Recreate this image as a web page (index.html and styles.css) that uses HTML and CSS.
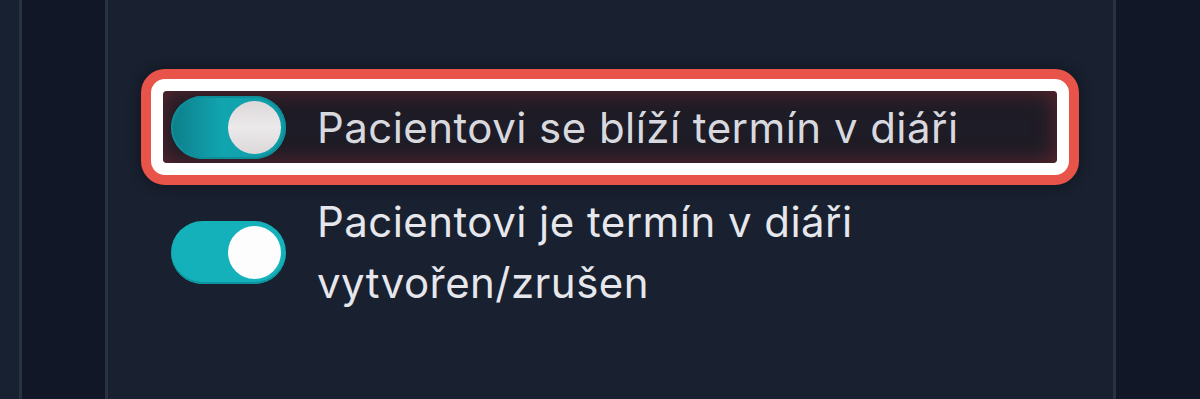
FILE: index.html
```html
<!DOCTYPE html>
<html>
<head>
    <title>Notifikace</title>
    <link rel="stylesheet" href="styles.css">
</head>
<body>
    <div class="layout">
        <div class="edge"></div>
        <div class="side"></div>

        <!-- Main settings panel -->
        <div class="panel">
            <div class="options">
                <div class="highlight">
                    <label class="option boxed">
                        <span class="switch dim"><span class="knob"></span></span>
                        <span class="option-text">Pacientovi se blíží termín v diáři</span>
                    </label>
                </div>
                <label class="option plain">
                    <span class="switch"><span class="knob"></span></span>
                    <span class="option-text bright">Pacientovi je termín v diáři<br>vytvořen/zrušen</span>
                </label>
            </div>
        </div>

        <div class="side right"></div>
    </div>
</body>
</html>
```

FILE: styles.css
```css
html, body {
    margin: 0;
    padding: 0;
    height: 100%;
    overflow: hidden;
}
body {
    font-family: Inter, "Noto Sans", sans-serif;
    background: #172030;
}
.layout {
    display: flex;
    height: 399px;
}
.edge {
    width: 19px;
    background: #182131;
}
.side {
    width: 83px;
    background: #111726;
    border-left: 3px solid #29323f;
    border-right: 3px solid #29323f;
}
.side.right {
    border-right: none;
    flex: 1;
}
.panel {
    width: 1005px;
    background: #19202f;
}
.options {
    padding: 69px 0 0 33px;
    display: flex;
    flex-direction: column;
    gap: 2px;
}
.highlight {
    width: 938px;
    box-sizing: border-box;
    padding: 12px;
    background: #ffffff;
    border: 10px solid #e8534a;
    border-radius: 24px;
    box-shadow: 0 0 12px 2px rgba(8, 10, 18, 0.4);
}
.option {
    display: flex;
    align-items: center;
    gap: 31px;
    width: 894px;
    box-sizing: border-box;
    padding: 4px 8px;
    cursor: pointer;
}
.option.plain {
    margin-left: 22px;
}
.boxed {
    height: 72px;
    border-radius: 4px;
    background: #1e1c26;
    box-shadow: inset 0 0 22px rgba(120, 42, 48, 0.75);
}
.switch {
    flex: none;
    position: relative;
    width: 115px;
    height: 63px;
    border-radius: 32px;
    background: #15b1ba;
    box-shadow: inset 0 -2px 0 #0d96a0;
}
.switch.dim {
    background: linear-gradient(90deg, #0d7f8a 0%, #11a5b0 45%, #0e9aa5 100%);
    box-shadow: inset 0 0 0 2px #0f8e99;
}
.knob {
    position: absolute;
    top: 5px;
    right: 5px;
    width: 53px;
    height: 53px;
    border-radius: 50%;
    background: #fdfdfd;
}
.dim .knob {
    background: linear-gradient(180deg, #dcd8da 0%, #ece9eb 50%, #dcd8da 100%);
}
.option-text {
    font-size: 42px;
    line-height: 61px;
    letter-spacing: 0.45px;
    color: #d8d9df;
}
.option-text.bright {
    color: #e6e7ec;
}
```
